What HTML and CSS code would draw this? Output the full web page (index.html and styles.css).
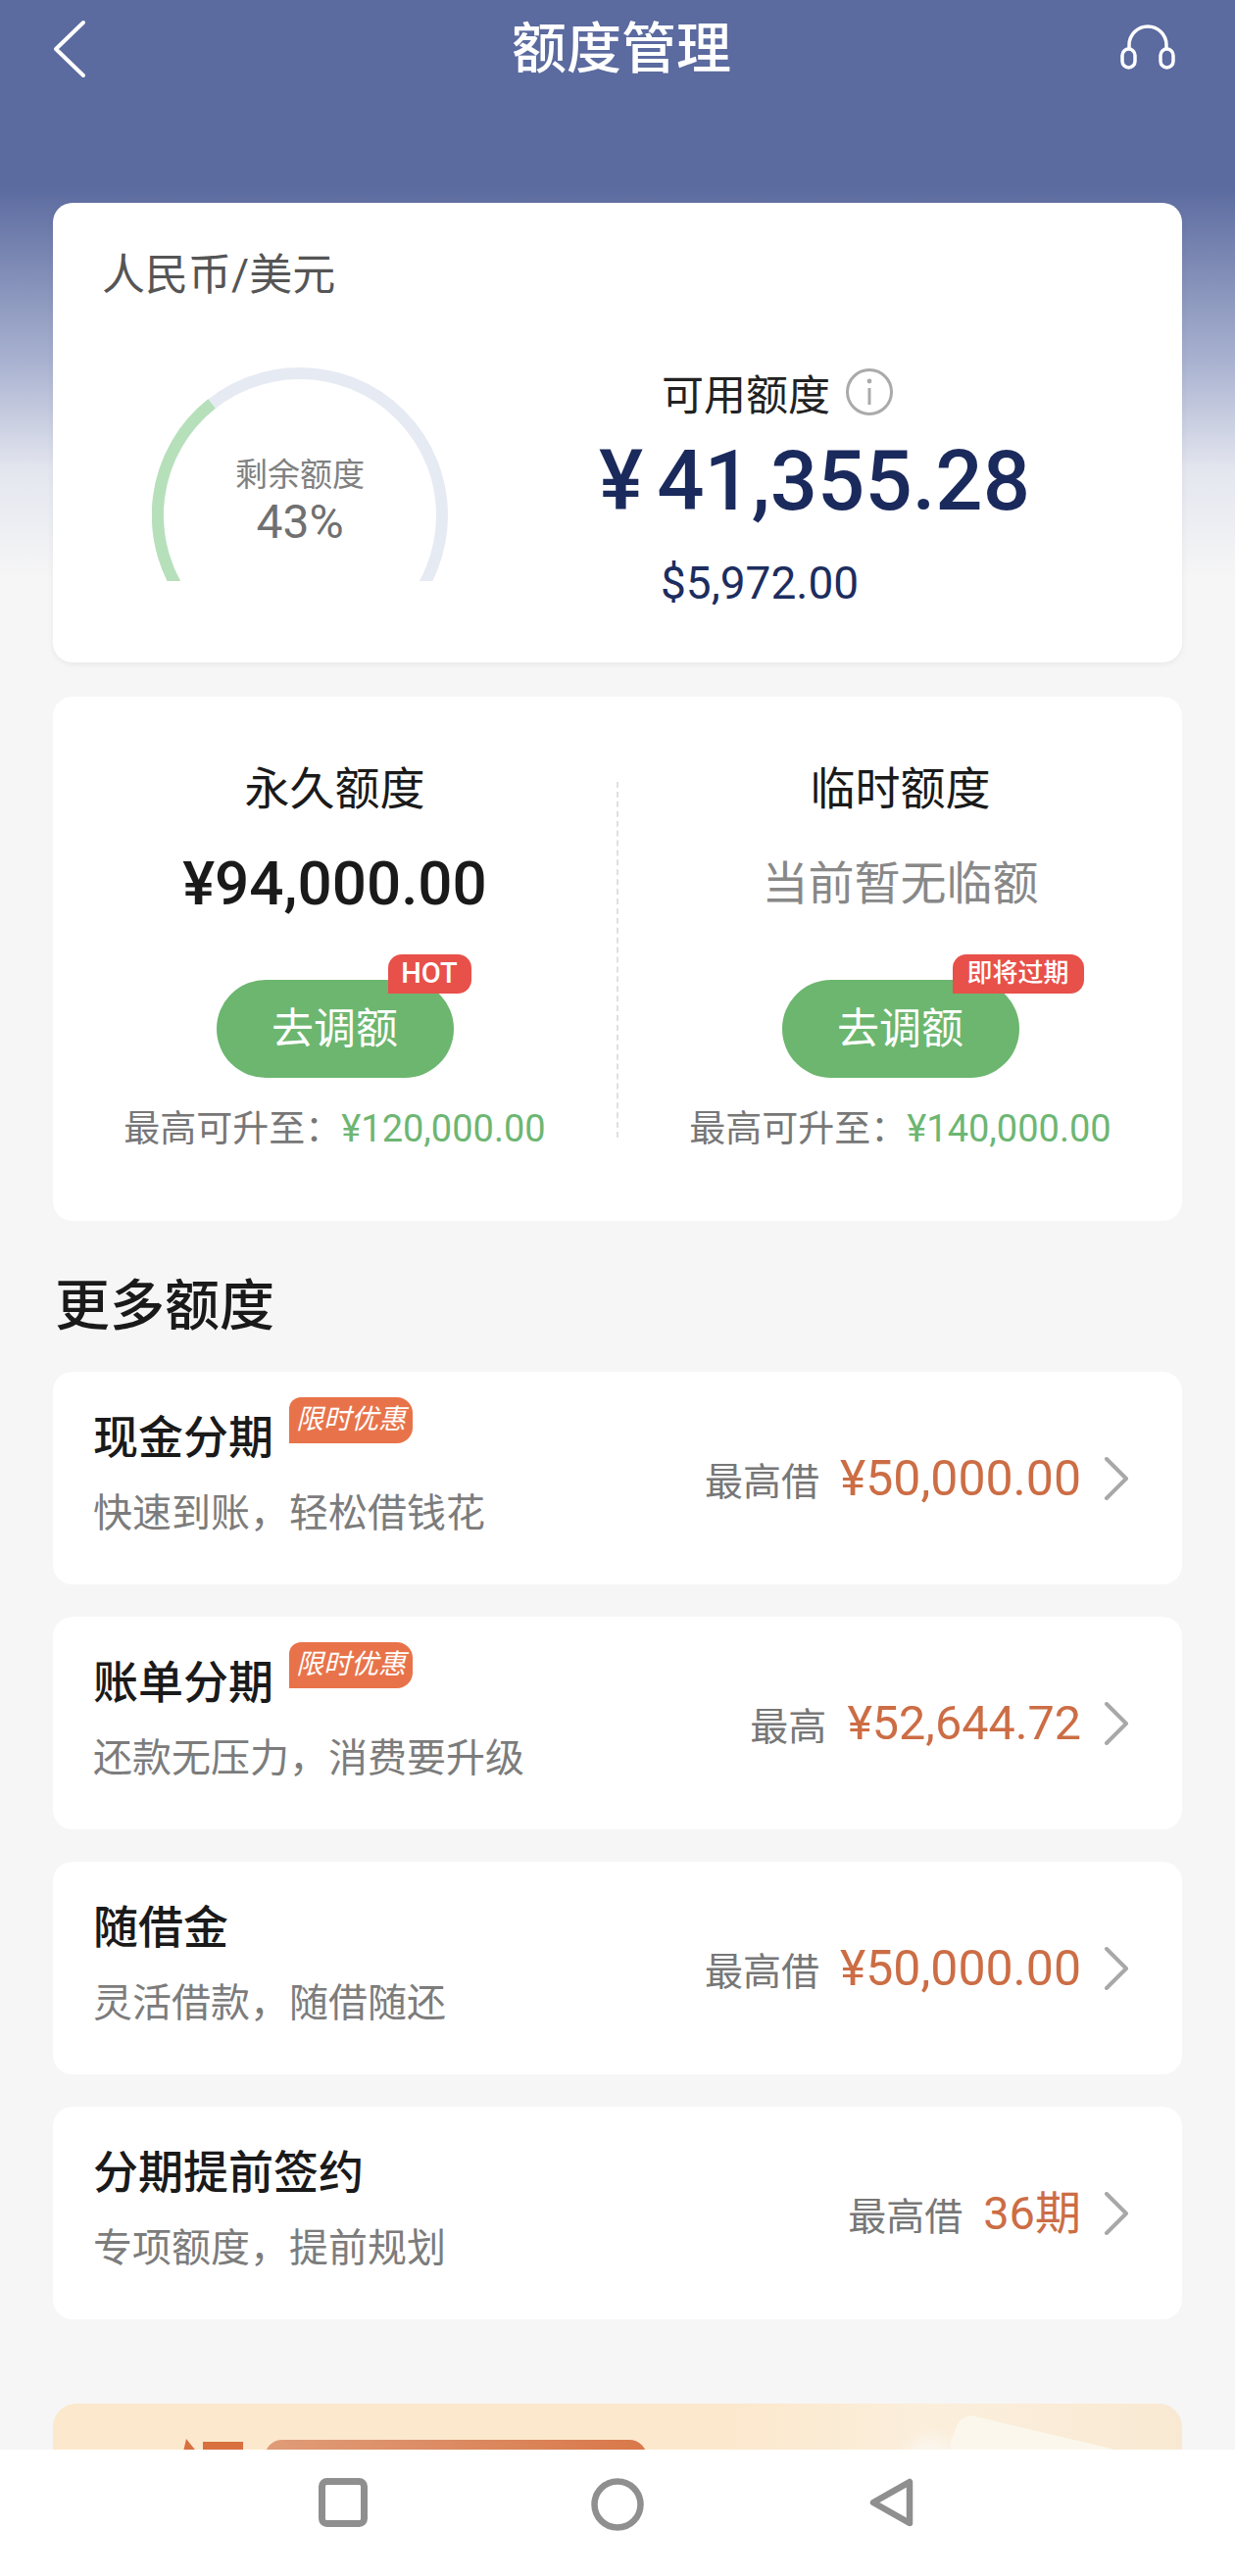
FILE: index.html
```html
<!DOCTYPE html>
<html lang="zh-CN">
<head>
  <meta charset="UTF-8">
  <meta name="viewport" content="width=device-width, initial-scale=1.0">
  <title>额度管理</title>
  <link rel="stylesheet" href="styles.css">
</head>
<body>
  <div class="page">
    <div class="content">
      <header class="topbar">
        <svg class="back" width="34" height="60" viewBox="0 0 34 60"><path d="M31 3 L3 30 L31 57" fill="none" stroke="#fff" stroke-width="4" stroke-linecap="round" stroke-linejoin="round"/></svg>
        <h1 class="page-title">额度管理</h1>
        <svg class="service" width="56" height="48" viewBox="0 0 56 48"><path d="M9 27 V23 A19 19 0 0 1 47 23 V27" fill="none" stroke="#fff" stroke-width="3.5"/><rect x="2" y="27" width="13" height="19" rx="6.5" fill="none" stroke="#fff" stroke-width="3.5"/><rect x="41" y="27" width="13" height="19" rx="6.5" fill="none" stroke="#fff" stroke-width="3.5"/></svg>
      </header>

      <section class="card summary">
        <p class="currency">人民币/美元</p>
        <div class="summary-body">
          <div class="gauge">
            <svg width="302" height="218" viewBox="0 0 302 218">
              <circle cx="151" cy="151" r="145" fill="none" stroke="#e6eaf2" stroke-width="12"/>
              <path d="M36.5 240 A145 145 0 0 1 61 37" fill="none" stroke="#b6e0ba" stroke-width="12"/>
            </svg>
            <div class="gauge-text">
              <p class="gauge-label">剩余额度</p>
              <p class="gauge-value">43%</p>
            </div>
          </div>
          <div class="available">
            <div class="available-label">
              <span>可用额度</span>
              <svg width="50" height="50" viewBox="0 0 50 50"><circle cx="25" cy="25" r="22.5" fill="none" stroke="#aaa" stroke-width="3"/><circle cx="25" cy="14" r="2.4" fill="#aaa"/><path d="M25 21 V38" stroke="#aaa" stroke-width="3"/></svg>
            </div>
            <p class="available-amount"><span class="yen">¥</span>41,355.28</p>
            <p class="available-usd">$5,972.00</p>
          </div>
        </div>
      </section>

      <section class="card limits">
        <div class="limit">
          <p class="limit-label">永久额度</p>
          <p class="limit-value">¥94,000.00</p>
          <div class="adjust">去调额<span class="tag tag-hot">HOT</span></div>
          <p class="limit-max">最高可升至：<span>¥120,000.00</span></p>
        </div>
        <div class="limit-divider"></div>
        <div class="limit">
          <p class="limit-label">临时额度</p>
          <p class="limit-value limit-none">当前暂无临额</p>
          <div class="adjust">去调额<span class="tag tag-expire">即将过期</span></div>
          <p class="limit-max">最高可升至：<span>¥140,000.00</span></p>
        </div>
      </section>

      <h2 class="section-title">更多额度</h2>

      <div class="product-list">
        <div class="card product">
          <div class="product-info">
            <div class="product-name"><span>现金分期</span><em class="promo">限时优惠</em></div>
            <p class="product-desc">快速到账，轻松借钱花</p>
          </div>
          <div class="product-side">
            <span class="side-label">最高借</span><span class="side-amount">¥50,000.00</span>
            <svg class="arrow" width="26" height="44" viewBox="0 0 26 44"><path d="M3 2 L23 22 L3 42" fill="none" stroke="#a8a8a8" stroke-width="4" stroke-linecap="round" stroke-linejoin="round"/></svg>
          </div>
        </div>
        <div class="card product">
          <div class="product-info">
            <div class="product-name"><span>账单分期</span><em class="promo">限时优惠</em></div>
            <p class="product-desc">还款无压力，消费要升级</p>
          </div>
          <div class="product-side">
            <span class="side-label">最高</span><span class="side-amount side-narrow">¥52,644.72</span>
            <svg class="arrow" width="26" height="44" viewBox="0 0 26 44"><path d="M3 2 L23 22 L3 42" fill="none" stroke="#a8a8a8" stroke-width="4" stroke-linecap="round" stroke-linejoin="round"/></svg>
          </div>
        </div>
        <div class="card product">
          <div class="product-info">
            <div class="product-name"><span>随借金</span></div>
            <p class="product-desc">灵活借款，随借随还</p>
          </div>
          <div class="product-side">
            <span class="side-label">最高借</span><span class="side-amount">¥50,000.00</span>
            <svg class="arrow" width="26" height="44" viewBox="0 0 26 44"><path d="M3 2 L23 22 L3 42" fill="none" stroke="#a8a8a8" stroke-width="4" stroke-linecap="round" stroke-linejoin="round"/></svg>
          </div>
        </div>
        <div class="card product">
          <div class="product-info">
            <div class="product-name"><span>分期提前签约</span></div>
            <p class="product-desc">专项额度，提前规划</p>
          </div>
          <div class="product-side">
            <span class="side-label">最高借</span><span class="side-amount side-term">36期</span>
            <svg class="arrow" width="26" height="44" viewBox="0 0 26 44"><path d="M3 2 L23 22 L3 42" fill="none" stroke="#a8a8a8" stroke-width="4" stroke-linecap="round" stroke-linejoin="round"/></svg>
          </div>
        </div>
      </div>

      <div class="banner">
        <div class="banner-peak"></div>
        <div class="banner-mark"></div>
        <div class="banner-pill"></div>
        <div class="banner-glow"></div>
        <div class="banner-paper"></div>
      </div>
    </div>

    <nav class="navbar">
      <div class="nav-item"><svg width="50" height="50" viewBox="0 0 50 50"><rect x="3.5" y="3.5" width="43" height="43" rx="5" fill="none" stroke="#8f8f8f" stroke-width="7"/></svg></div>
      <div class="nav-item"><svg width="54" height="54" viewBox="0 0 54 54"><circle cx="27" cy="27" r="23.5" fill="none" stroke="#8f8f8f" stroke-width="6.5"/></svg></div>
      <div class="nav-item"><svg width="46" height="50" viewBox="0 0 46 50"><path d="M41 4 V46 L4 25 Z" fill="none" stroke="#8f8f8f" stroke-width="6.5" stroke-linejoin="round"/></svg></div>
    </nav>
  </div>
</body>
</html>
```

FILE: styles.css
```css
* {
  box-sizing: border-box;
}

html, body {
  margin: 0;
  height: 100%;
}

body {
  font-family: Roboto, "Noto Sans CJK SC", sans-serif;
  color: #1a1a1a;
}

p, h1, h2 {
  margin: 0;
  font-weight: 400;
}

.page {
  height: 100vh;
  display: flex;
  flex-direction: column;
  overflow: hidden;
  background: #f6f6f6;
}

.content {
  flex: 1;
  min-height: 0;
  overflow: hidden;
  padding: 0 54px;
  background: linear-gradient(#5b6a9f 0, #5b6a9f 190px, #a9b2d0 370px, #e4e6ef 480px, #f6f6f6 590px);
}

.topbar {
  height: 207px;
  display: flex;
  justify-content: space-between;
  align-items: flex-start;
  padding: 20px 7px 0 0;
}

.page-title {
  font-size: 56px;
  line-height: 60px;
  font-weight: 500;
  color: #fff;
  margin-left: 37px;
}

.service {
  margin-top: 3px;
}

.card {
  background: #fff;
  border-radius: 20px;
}

.summary {
  height: 469px;
  padding: 44px 0 0 50px;
  box-shadow: 0 2px 6px rgba(0, 0, 0, 0.06);
}

.currency {
  font-size: 44px;
  line-height: 60px;
  color: #555;
}

.summary-body {
  display: flex;
  margin-top: 59px;
}

.gauge {
  position: relative;
  width: 302px;
  height: 218px;
  margin: 5px 0 0 51px;
}

.gauge svg {
  display: block;
}

.gauge-text {
  position: absolute;
  top: 85px;
  left: 0;
  right: 0;
  text-align: center;
}

.gauge-label {
  font-size: 33px;
  line-height: 50px;
  color: #808080;
}

.gauge-value {
  font-size: 48px;
  line-height: 46px;
  color: #707070;
}

.available {
  margin-left: 154px;
}

.available-label {
  display: flex;
  align-items: center;
  gap: 15px;
  height: 60px;
  margin-left: 64px;
  font-size: 43px;
  color: #222;
}

.available-amount {
  font-size: 85px;
  line-height: 100px;
  margin-top: 11px;
  font-weight: 500;
  color: #1b2a5c;
}

.yen {
  margin-right: 14px;
}

.available-usd {
  font-size: 46px;
  line-height: 60px;
  margin: 24px 0 0 63px;
  color: #1d2d5f;
}

.limits {
  display: grid;
  grid-template-columns: 1fr 2px 1fr;
  height: 535px;
  margin-top: 35px;
}

.limit {
  display: flex;
  flex-direction: column;
  align-items: center;
  padding-top: 64px;
}

.limit-label {
  font-size: 46px;
  line-height: 60px;
}

.limit-value {
  font-size: 62px;
  line-height: 72px;
  margin-top: 31px;
  margin-bottom: 1px;
  font-weight: 500;
}

.limit-none {
  font-size: 47px;
  font-weight: 400;
  color: #888;
}

.adjust {
  position: relative;
  width: 242px;
  height: 100px;
  margin-top: 61px;
  border-radius: 50px;
  background: #6cb66f;
  color: #fff;
  font-size: 43px;
  line-height: 100px;
  text-align: center;
}

.tag {
  position: absolute;
  top: -26px;
  height: 40px;
  border-radius: 14px 14px 14px 0;
  background: #e8504a;
  color: #fff;
  font-weight: 500;
  text-align: center;
}

.tag-hot {
  left: 175px;
  width: 85px;
  font-size: 29px;
  line-height: 38px;
}

.tag-expire {
  left: 174px;
  width: 134px;
  font-size: 26px;
  line-height: 38px;
}

.limit-max {
  margin-top: 27px;
  font-size: 37px;
  line-height: 50px;
  color: #777;
  white-space: nowrap;
}

.limit-max span {
  font-size: 38px;
  color: #6db673;
}

.limit-divider {
  margin: 87px 0 85px;
  border-left: 2px dashed #e0e0e0;
}

.section-title {
  margin-top: 52px;
  padding-left: 2px;
  font-size: 56px;
  line-height: 70px;
  font-weight: 500;
}

.product-list {
  display: flex;
  flex-direction: column;
  gap: 33px;
  margin-top: 32px;
}

.product {
  display: flex;
  justify-content: space-between;
  align-items: center;
  height: 217px;
  padding: 0 54px 0 41px;
}

.product-info {
  align-self: flex-start;
  padding-top: 37px;
}

.product-name {
  display: flex;
  align-items: flex-start;
  height: 60px;
  font-size: 46px;
  line-height: 60px;
  font-weight: 500;
}

.promo {
  margin: -11px 0 0 16px;
  width: 126px;
  height: 47px;
  border-radius: 12px 16px 16px 0;
  background: #e8734a;
  color: #fff;
  font-size: 28px;
  line-height: 46px;
  font-weight: 400;
  text-align: center;
}

.product-desc {
  margin-top: 20px;
  font-size: 40px;
  line-height: 56px;
  color: #7c7c7c;
}

.product-side {
  display: flex;
  align-items: center;
  white-space: nowrap;
}

.side-label {
  font-size: 39px;
  color: #777;
}

.side-amount {
  margin-left: 21px;
  font-size: 50px;
  line-height: 56px;
  color: #cc6d45;
}

.side-narrow {
  font-size: 48.5px;
}

.side-term {
  font-size: 47px;
}

.arrow {
  margin-left: 23px;
}

.banner {
  position: relative;
  height: 120px;
  margin-top: 86px;
  border-radius: 24px 24px 0 0;
  background: linear-gradient(90deg, #fce8cd 0, #fce8cd 60%, #fbefdc 78%, #f9e9d3 100%);
}

.banner-peak {
  position: absolute;
  top: 36px;
  left: 127px;
  width: 18px;
  height: 40px;
  background: #d9703f;
  clip-path: polygon(50% 0, 100% 28%, 100% 100%, 0 100%);
}

.banner-mark {
  position: absolute;
  top: 39px;
  left: 153px;
  width: 41px;
  height: 40px;
  background: #d9703f;
}

.banner-pill {
  position: absolute;
  top: 37px;
  left: 216px;
  width: 390px;
  height: 60px;
  border-radius: 18px;
  background: linear-gradient(90deg, #df9c78, #d9784a);
}

.banner-glow {
  position: absolute;
  top: 25px;
  left: 860px;
  width: 70px;
  height: 70px;
  border-radius: 50%;
  background: radial-gradient(#fbf6ee 30%, rgba(251, 246, 238, 0) 70%);
}

.banner-paper {
  position: absolute;
  top: 12px;
  left: 913px;
  width: 180px;
  height: 60px;
  background: #fbf7ec;
  clip-path: polygon(0 50px, 3px 25px, 12px 5px, 23px 0, 167px 34px, 175px 50px);
}

.navbar {
  flex: none;
  height: 129px;
  display: flex;
  justify-content: center;
  padding-top: 29px;
  background: #fff;
}

.nav-item {
  width: 280px;
  display: flex;
  justify-content: center;
  align-items: flex-start;
}
```
